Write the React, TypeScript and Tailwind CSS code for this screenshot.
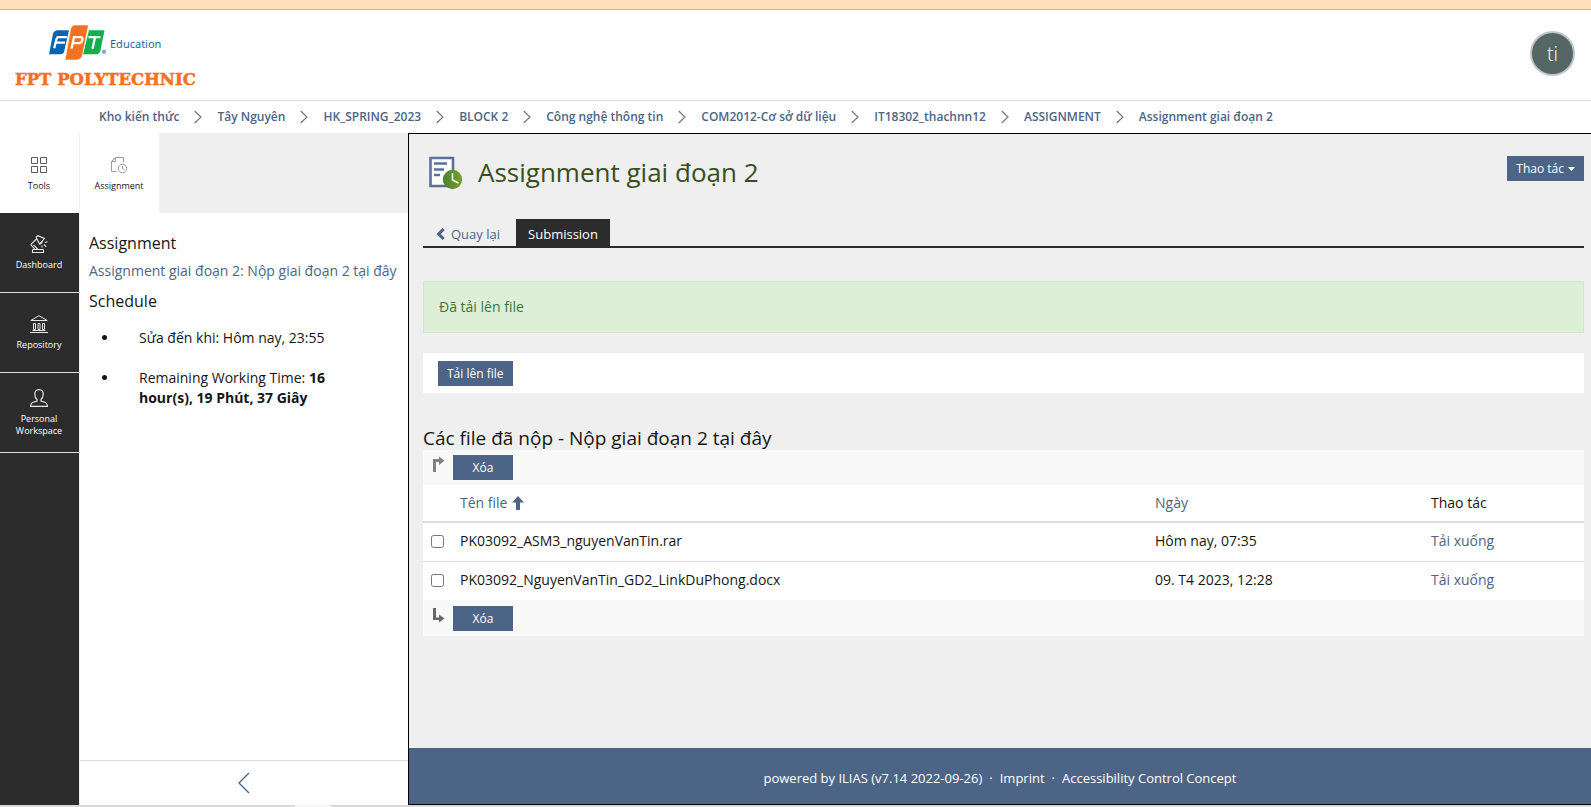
import React from "react";

const crumbs = [
  "Kho kiến thức",
  "Tây Nguyên",
  "HK_SPRING_2023",
  "BLOCK 2",
  "Công nghệ thông tin",
  "COM2012-Cơ sở dữ liệu",
  "IT18302_thachnn12",
  "ASSIGNMENT",
  "Assignment giai đoạn 2",
];

const files = [
  { name: "PK03092_ASM3_nguyenVanTin.rar", date: "Hôm nay, 07:35" },
  { name: "PK03092_NguyenVanTin_GD2_LinkDuPhong.docx", date: "09. T4 2023, 12:28" },
];

function Logo() {
  return (
    <a href="#" aria-label="FPT Education, FPT Polytechnic" className="block">
      <svg width="200" height="76" viewBox="0 0 200 76" className="block">
        <path d="M54 12.200H69L64 34.200Q63 36.200 60 36.200H49L53 15.700Q54 12.200 58 12.200Z" fill="#0565b1" />
        <path d="M89 12.200H104.500L100.500 32.200Q99.500 36.200 96 36.200H83Z" fill="#10b04c" />
        <path d="M75 7H88.500L82.500 37Q81 42 76 42H65L70.500 11.500Q71.500 7 75 7Z" fill="#f47023" stroke="#fff" strokeWidth="0.6" />
        <g fill="none" stroke="#fff" strokeWidth="2.300">
          <path d="M67 19.200H58.500Q57 19.200 56.600 20.700L54.200 30.200M55.800 24.700H65" />
          <path d="M71.500 30.700L74 19.200H80.500Q83 19.200 82.400 21.900T79.500 25.200H73" />
          <path d="M88.500 19.200H100.500M95 19.200L92.500 30.700" />
        </g>
        <circle cx="104" cy="33.700" r="1.600" fill="#8db9dc" stroke="#4b8fc8" strokeWidth="0.800" />
        <text x="110" y="30" fontSize="11" fill="#1f66a8" fontFamily="'Noto Sans', sans-serif">Education</text>
        <text x="15" y="66.500" fontSize="16.500" fontWeight="700" fill="#f47023" stroke="#f47023" strokeWidth="0.500" fontFamily="'DejaVu Serif', serif">FPT POLYTECHNIC</text>
      </svg>
    </a>
  );
}

function Chevron() {
  return (
    <svg width="8" height="14" viewBox="0 0 8 14" className="mx-[15px] shrink-0" fill="none" stroke="#777" strokeWidth="1.200" aria-hidden="true">
      <path d="M0.700 1L7 7L0.700 13" />
    </svg>
  );
}

const ToolsIcon = () => (
  <svg width="18" height="18" viewBox="0 0 18 18" fill="none" stroke="#5b5b5b" aria-hidden="true">
    <path d="M1.500 1.500h6v6h-6zM10.500 1.500h6v6h-6zM1.500 10.500h6v6h-6zM10.500 10.500h6v6h-6z" />
  </svg>
);

const LampIcon = () => (
  <svg width="18" height="18" viewBox="0 0 18 18" fill="none" stroke="#e8e8e8" strokeWidth="1.100" aria-hidden="true">
    <path d="M2.500 15.300Q2.500 14.500 3.300 14.500H12.700Q13.500 14.500 13.500 15.300V17.500H2.500ZM5 14.500L1 10L1.500 8.800L6.500 4M8 14.500L3.500 9.800M6 2L8 0.700L14.500 3.500L9.500 9L6 2M9.500 9Q11.500 9 12.500 6M15 7.500L17.500 6.800M14 9.500L16.200 11.800M12 10.500V12.500" />
  </svg>
);

const BankIcon = () => (
  <svg width="18" height="18" viewBox="0 0 18 18" fill="none" stroke="#e8e8e8" aria-hidden="true">
    <path d="M9 0.700L0.800 5.500H17.200ZM0 17.500H18M2.500 15.500H15.500M3.500 8.500h2v6h-2zM8 8.500h2v6h-2zM12.500 8.500h2v6h-2z" />
  </svg>
);

const PersonIcon = () => (
  <svg width="18" height="18" viewBox="0 0 18 18" fill="none" stroke="#e8e8e8" strokeWidth="1.200" aria-hidden="true">
    <path d="M9 0.700C5.800 0.700 4.600 2.800 4.800 5.500C4.900 7.800 5.800 9.500 7 10.500V12L2.500 13.500Q0.700 14.200 0.600 17.300H17.400Q17.300 14.200 15.500 13.500L11 12V10.500C12.200 9.500 13.100 7.800 13.200 5.500C13.400 2.800 12.200 0.700 9 0.700Z" />
  </svg>
);

const SheetClockIcon = () => (
  <svg width="18" height="18" viewBox="0 0 18 18" fill="none" stroke="#9a9a9a" aria-hidden="true">
    <path d="M6.500 15.500H1.500V5.500L5.500 1.500H13.500V6.500M1.500 5.500H5.500V1.500" />
    <circle cx="12.500" cy="12.500" r="4.200" />
    <path d="M12.500 9.800V12.700L14.500 13.500" />
  </svg>
);

const menu = [
  { label: "Dashboard", icon: <LampIcon /> },
  { label: "Repository", icon: <BankIcon /> },
  { label: "Personal Workspace", icon: <PersonIcon /> },
];

function TitleIcon() {
  return (
    <svg width="36" height="36" viewBox="0 0 36 36" aria-hidden="true">
      <defs>
        <linearGradient id="sheet" x1="0" x2="1" y1="0" y2="1">
          <stop offset="0" stopColor="#5b74a8" />
          <stop offset="1" stopColor="#5c6b88" />
        </linearGradient>
        <linearGradient id="dial" x1="0" x2="1">
          <stop offset="0" stopColor="#4c8030" />
          <stop offset="1" stopColor="#74a228" />
        </linearGradient>
      </defs>
      <path d="M2.500 2H25V30H2.500Z" fill="#fff" stroke="url(#sheet)" strokeWidth="2.600" />
      <path d="M6 7.500H19M6 13.500H16M6 19H12" stroke="#5b70a0" strokeWidth="2.600" />
      <circle cx="24.500" cy="23.500" r="9.700" fill="url(#dial)" />
      <path d="M24.500 17V24L30.500 27" fill="none" stroke="#fff" strokeWidth="1.500" />
    </svg>
  );
}

function BulkBar({ down, children }: { down?: boolean; children: React.ReactNode }) {
  return (
    <div className={`flex items-start gap-2 bg-[#f9f9f9] pl-2 ${down ? "pt-[6px] pb-[5px]" : "py-[5px]"}`}>
      <svg width="14" height="18" viewBox="0 0 14 18" aria-hidden="true" className="shrink-0">
        {down ? (
          <path d="M2 2H5V11.500H8V8.500L13.500 12.500L8 16.500V14H2Z" fill="#686868" />
        ) : (
          <path d="M2 17V4H8V1.500L13.500 5.800L8 10V7H5V17Z" fill="#808080" />
        )}
      </svg>
      {children}
    </div>
  );
}

const deleteButton = (
  <button type="button" className="h-[25px] w-[60px] bg-[#4c6586] text-xs text-white">Xóa</button>
);

export default function App() {
  return (
    <div className="flex min-h-screen flex-col bg-white font-['Open_Sans',sans-serif] text-sm leading-5 text-[#161616]">
      <div className="h-[10px] border-b border-[#d0b58f] bg-[#ffdeb8]" />
      <header className="flex items-start justify-between border-b border-[#dddddd] pt-2 pb-[6px]">
        <Logo />
        <button type="button" className="mt-[13px] mr-4 flex size-[45px] items-center justify-center rounded-full border-2 border-[#bcc7c6] bg-[#556664] text-xl font-light text-white">
          ti
        </button>
      </header>
      <nav aria-label="Breadcrumb" className="flex h-8 items-center pl-[99px] text-xs font-semibold text-[#4c6586]">
        {crumbs.map((c, i) => (
          <React.Fragment key={c}>
            {i > 0 && <Chevron />}
            <a href="#" className="whitespace-nowrap">{c}</a>
          </React.Fragment>
        ))}
      </nav>

      <div className="flex flex-1">
        <nav aria-label="Main" className="flex w-[79px] shrink-0 flex-col bg-[#2c2c2c] text-[9px] leading-3 text-white">
          <button type="button" className="flex h-20 flex-col items-center justify-center gap-[6px] bg-white pt-[2px] pr-px text-[#161616]">
            <ToolsIcon />
            <span>Tools</span>
          </button>
          {menu.map((m) => (
            <button key={m.label} type="button" className="flex h-20 flex-col items-center justify-center gap-[6px] border-b border-[#dddddd] pr-3 pl-[11px] font-medium">
              {m.icon}
              <span>{m.label}</span>
            </button>
          ))}
        </nav>

        <aside className="flex w-[329px] shrink-0 flex-col border-l border-[#f0f0f0]">
          <div className="flex h-20 bg-[#efefef]">
            <button type="button" className="flex w-[79px] flex-col items-center justify-center gap-[6px] bg-white pt-[2px] pr-px text-[9px] leading-3">
              <SheetClockIcon />
              <span>Assignment</span>
            </button>
          </div>
          <div className="flex-1 px-[9px] pt-5">
            <h2 className="text-base leading-5">Assignment</h2>
            <a href="#" className="mt-2 block whitespace-nowrap text-[#4c6586]">Assignment giai đoạn 2: Nộp giai đoạn 2 tại đây</a>
            <h2 className="mt-[10px] text-base leading-5">Schedule</h2>
            <ul className="mt-[17px] flex flex-col gap-5">
              {[
                <>Sửa đến khi: Hôm nay, 23:55</>,
                <>Remaining Working Time: <b className="font-bold">16</b> <b className="font-bold">hour(s), 19 Phút, 37 Giây</b></>,
              ].map((t, i) => (
                <li key={i} className="flex pr-10 pl-[13px]">
                  <span className="mt-[7px] mr-8 size-[5px] shrink-0 rounded-full bg-[#161616]" />
                  <span>{t}</span>
                </li>
              ))}
            </ul>
          </div>
          <button type="button" aria-label="Collapse" className="flex h-[45px] items-center justify-center border-t border-[#dddddd]">
            <svg width="12" height="22" viewBox="0 0 12 22" fill="none" stroke="#4c6586" strokeWidth="1.300">
              <path d="M11 1L1 11L11 21" />
            </svg>
          </button>
        </aside>

        <main className="flex min-w-0 flex-1 flex-col border-y border-l border-black bg-[#efefef]">
          <div className="flex-1 pr-[7px] pl-[14px]">
            <div className="flex items-start justify-between pt-[22px]">
              <div className="flex items-start pl-[5px]">
                <TitleIcon />
                <h1 className="ml-[14px] text-[26px] leading-8 text-[#3a4e1c]">Assignment giai đoạn 2</h1>
              </div>
              <button type="button" className="flex h-[25px] items-center gap-1 bg-[#4c6586] px-[9px] text-xs text-white">
                Thao tác
                <svg width="7" height="4" viewBox="0 0 7 4" aria-hidden="true"><path d="M0 0H7L3.500 4Z" fill="#fff" /></svg>
              </button>
            </div>
            <div className="mt-[27px] flex h-[29px] border-b-2 border-[#2c2c2c] text-[13px]">
              <a href="#" className="flex w-[93px] items-center gap-[6px] pt-[2px] pl-[13px] text-[#4c6586]">
                <svg width="9" height="12" viewBox="0 0 9 12" aria-hidden="true"><path d="M6.500 0L8.800 2L4.800 6L8.800 10L6.500 12L0.500 6Z" fill="#4c6586" /></svg>
                Quay lại
              </a>
              <a href="#" className="flex w-[94px] items-center justify-center bg-[#2c2c2c] pt-[2px] text-white">Submission</a>
            </div>
            <div role="status" className="mt-[33px] border border-[#d0e9c6] bg-[#deefd8] px-[15px] py-[15px] text-[#3c763d]">Đã tải lên file</div>
            <div className="mt-5 bg-white px-[15px] pt-2 pb-[7px]">
              <button type="button" className="block h-[25px] bg-[#4c6586] px-[9px] text-xs text-white">Tải lên file</button>
            </div>
            <h2 className="mt-[33px] text-[19px] leading-6">Các file đã nộp - Nộp giai đoạn 2 tại đây</h2>
            <BulkBar>{deleteButton}</BulkBar>
            <table className="w-full table-fixed bg-white text-left">
              <colgroup>
                <col className="w-[29px]" />
                <col />
                <col className="w-[276px]" />
                <col className="w-[161px]" />
              </colgroup>
              <thead>
                <tr className="h-[37px] border-b-2 border-[#dddddd] text-[#4c6586]">
                  <th />
                  <th className="px-2 font-normal">
                    <a href="#" className="flex items-center gap-[5px]">
                      Tên file
                      <svg width="12" height="14" viewBox="0 0 12 14" aria-hidden="true"><path d="M6 0L12 6.500H8V14H4V6.500H0Z" fill="#4c6586" /></svg>
                    </a>
                  </th>
                  <th className="px-2 font-normal"><a href="#">Ngày</a></th>
                  <th className="px-2 font-normal text-[#161616]">Thao tác</th>
                </tr>
              </thead>
              <tbody>
                {files.map((f) => (
                  <tr key={f.name} className="h-[39px] border-b border-[#dddddd] last:border-0">
                    <td className="pl-2"><input type="checkbox" aria-label={f.name} className="block size-[13px]" /></td>
                    <td className="px-2 pb-[2px]">{f.name}</td>
                    <td className="px-2 pb-[2px]">{f.date}</td>
                    <td className="px-2 pb-[2px]"><a href="#" className="text-[#4c6586]">Tải xuống</a></td>
                  </tr>
                ))}
              </tbody>
            </table>
            <BulkBar down>{deleteButton}</BulkBar>
          </div>
          <footer className="flex h-14 items-center justify-center gap-[7px] bg-[#4c6586] pt-1 text-[13px] text-white">
            <span>powered by ILIAS (v7.14 2022-09-26)</span>
            <span>·</span>
            <a href="#">Imprint</a>
            <span>·</span>
            <a href="#">Accessibility Control Concept</a>
          </footer>
        </main>
      </div>
      <div className="flex h-[2px] bg-[#d9d9d9]"><div className="ml-[295px] w-9 bg-[#f5f5f5]" /></div>
    </div>
  );
}
